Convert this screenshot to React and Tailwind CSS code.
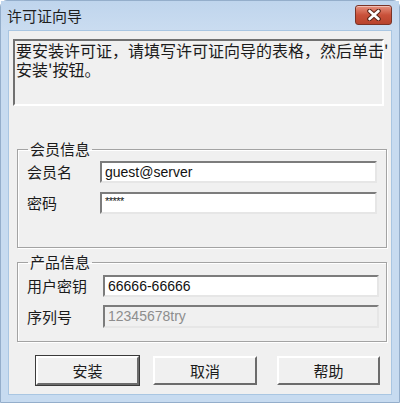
import React from 'react'

function Field({ label, value, labelW, inputW, h = 'h-[22px]', disabled, mono }) {
  return (
    <div className="flex items-center">
      <span className={`${labelW} text-[15px] leading-[18px]`}>{label}</span>
      <div
        className={`${inputW} ${h} flex items-center pl-[3px] border-2 border-t-[#7c7c7c] border-l-[#7c7c7c] border-b-[#e6e6e6] border-r-[#e6e6e6] font-['Liberation_Sans',sans-serif] text-[14px] ${
          disabled ? 'bg-[#f0f0f0] text-[#8d8d8d]' : 'bg-white text-[#111]'
        }`}
      >
        <span className={mono ? 'text-[11px] -mt-[4px] tracking-[-0.5px]' : ''}>{value}</span>
      </div>
    </div>
  )
}

function Button({ children, w, isDefault }) {
  return (
    <button
      className={`${w} h-[29px] bg-[#f0f0f0] border-2 border-t-white border-l-white border-b-[#6b6b6b] border-r-[#6b6b6b] text-[15px] leading-[18px] ${
        isDefault ? 'outline outline-1 outline-[#3a3a3a]' : ''
      }`}
    >
      {children}
    </button>
  )
}

export default function App() {
  return (
    <div className="w-[400px] h-[403px] bg-[#c7dbf0] rounded-t-[7px] border border-[#94aecb] flex flex-col font-['Noto_Sans_CJK_SC','Liberation_Sans',sans-serif] text-[#1b1b1b]">
      {/* Title bar */}
      <div className="h-[29px] flex items-start bg-gradient-to-b from-[#bfd5ed] to-[#cadcf0]">
        <span className="pl-[6px] pt-[6px] text-[15px] leading-[18px] text-[#1e1e1e]">许可证向导</span>
        <div className="ml-auto mr-[7px] mt-[4px] w-[37px] h-[20px] rounded-[3px] border border-[#7a3326] bg-gradient-to-b from-[#e5907e] via-[#c9513a] to-[#b8432c] flex items-center justify-center shadow-[inset_0_1px_0_rgba(255,255,255,0.45)]">
          <svg width="16" height="12" viewBox="0 0 16 12">
            <path d="M3.5 2 L12.5 10 M12.5 2 L3.5 10" stroke="#5a2418" strokeWidth="4.6" strokeLinecap="round" />
            <path d="M3.5 2 L12.5 10 M12.5 2 L3.5 10" stroke="#ffffff" strokeWidth="2.6" strokeLinecap="round" />
          </svg>
        </div>
      </div>

      {/* Client area */}
      <div className="mx-[7px] h-[365px] bg-[#f0f0f0] border border-[#a9c6e2] flex flex-col">
        <div className="ml-[4px] mt-[8px] w-[371px] h-[67px] border-2 border-t-[#707070] border-l-[#707070] border-b-white border-r-white bg-[#f0f0f0] pl-[1px] text-[16px] leading-[19px] whitespace-nowrap">
          <div>要安装许可证，请填写许可证向导的表格，然后单击'</div>
          <div>安装'按钮。</div>
        </div>

        <fieldset className="ml-[8px] mt-[34px] w-[370px] h-[108px] border border-[#a3a3a3] shadow-[inset_1px_1px_0_white,1px_1px_0_white]">
          <legend className="ml-[10px] px-[2px] text-[15px] leading-[18px]">会员信息</legend>
          <div className="pl-[9px] pt-[3px] flex flex-col gap-[9px]">
            <Field label="会员名" value="guest@server" labelW="w-[73px]" inputW="w-[277px]" />
            <Field label="密码" value="*****" labelW="w-[73px]" inputW="w-[277px]" mono />
          </div>
        </fieldset>

        <fieldset className="ml-[8px] mt-[5px] w-[370px] h-[89px] border border-[#a3a3a3] shadow-[inset_1px_1px_0_white,1px_1px_0_white]">
          <legend className="ml-[10px] px-[2px] text-[15px] leading-[18px]">产品信息</legend>
          <div className="pl-[9px] pt-[4px] flex flex-col gap-[8px]">
            <Field label="用户密钥" value="66666-66666" labelW="w-[76px]" inputW="w-[276px]" />
            <Field label="序列号" value="12345678try" labelW="w-[76px]" inputW="w-[276px]" h="h-[23px]" disabled />
          </div>
        </fieldset>

        <div className="mt-[14px] pl-[27px] flex">
          <Button w="w-[103px]" isDefault>安装</Button>
          <div className="ml-[14px]"><Button w="w-[104px]">取消</Button></div>
          <div className="ml-[20px]"><Button w="w-[103px]">帮助</Button></div>
        </div>
      </div>
    </div>
  )
}
